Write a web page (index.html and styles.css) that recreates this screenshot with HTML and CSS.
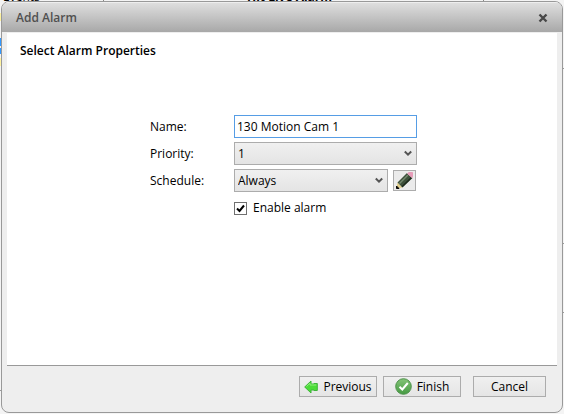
FILE: index.html
```
<!DOCTYPE html>
<html lang="en">
    <head>
        <meta charset="UTF-8">
        <meta name="viewport" content="width=device-width, initial-scale=1">
        <title>Add Alarm</title>
        <link rel="stylesheet" href="styles.css">
    </head>
    <body>
        <!-- Window behind the dialog -->
        <div class="backdrop" aria-hidden="true">
            <div class="caption left">Events</div>
            <div class="caption middle">Hit Live Alarm</div>
            <div class="divider"></div>
            <div class="divider second"></div>
            <div class="mark yellow"></div>
            <div class="mark blue"></div>
            <div class="mark blue second"></div>
            <div class="mark yellow second"></div>
            <div class="rule low"></div>
            <div class="rule right"></div>
            <div class="rule right second"></div>
            <div class="rule right third"></div>
        </div>

        <form class="dialog">
            <div class="titlebar">
                <h1>Add Alarm</h1>
                <button type="button" class="close" aria-label="Close">
                    <svg width="10" height="10" viewBox="0 0 10 10">
                        <path d="M1.500 1.500L8.500 8.500M8.500 1.500L1.500 8.500" stroke="#484848" stroke-width="2.400" fill="none"/>
                    </svg>
                </button>
            </div>

            <div class="page">
                <h2>Select Alarm Properties</h2>
                <div class="fields">
                    <label for="name">Name:</label>
                    <input type="text" id="name" class="box wide" value="130 Motion Cam 1">

                    <label for="priority">Priority:</label>
                    <select id="priority" class="box wide">
                        <option>1</option>
                    </select>

                    <label for="schedule">Schedule:</label>
                    <select id="schedule" class="box">
                        <option>Always</option>
                    </select>
                    <button type="button" class="edit" aria-label="Edit schedule">
                        <svg width="19" height="19" viewBox="0 0 19 19">
                            <path d="M1.500 17.500L2.500 11.500L7.500 16.500Z" fill="#e2cf8c"/>
                            <path d="M1.500 17.500V15L4 17.500Z" fill="#080808" stroke="#080808"/>
                            <path d="M2.500 11.500L12 2L17.500 7L7.500 16.500Z" fill="#3d503b"/>
                            <path d="M4.500 12.500L13 4" stroke="#75896f" stroke-width="1.400"/>
                            <path d="M7 15.800L16.500 6.500" stroke="#1c2a1c" stroke-width="1.400"/>
                            <path d="M12.500 2.500L14 1.500H17.500V5L17 6.500Z" fill="#e79cb9" stroke="#e79cb9"/>
                        </svg>
                    </button>

                    <div class="check">
                        <input type="checkbox" id="enable" checked>
                        <label for="enable">Enable alarm</label>
                    </div>
                </div>
            </div>

            <div class="buttons">
                <button type="button">
                    <svg width="14" height="14" viewBox="0 0 14 14">
                        <path d="M.7 7L7 1V4H10V3.500H13.300V10.500H10V10H7V13Z" fill="#4bdc38" stroke="#3fb43a" stroke-linejoin="round"/>
                        <path d="M2.500 6.500L6 3.200V5H12.300" stroke="#8df07a" fill="none"/>
                    </svg>
                    Previous
                </button>
                <button type="submit">
                    <svg width="17" height="17" viewBox="0 0 17 17">
                        <defs>
                            <linearGradient id="green" x1="0" y1="0" x2="0" y2="1">
                                <stop offset="0" stop-color="#84c478"/>
                                <stop offset="1" stop-color="#459a42"/>
                            </linearGradient>
                        </defs>
                        <circle cx="8.500" cy="8.500" r="7.800" fill="url(#green)" stroke="#4f924c"/>
                        <path d="M4.500 8.700L7.300 11.500L12.800 5" stroke="#fff" stroke-width="2" fill="none"/>
                    </svg>
                    Finish
                </button>
                <button type="button" class="cancel">Cancel</button>
            </div>
        </form>
    </body>
</html>
```
FILE: styles.css
```
* {
    box-sizing: border-box;
}

body {
    margin: 0;
    min-height: 100vh;
    padding: 1px;
    display: flex;
    background: #f4f4f4;
    color: #000;
    font: 12px/16px "Open Sans", "Noto Sans", sans-serif;
}

/* What shows round the edges of the dialog */
.backdrop {
    position: absolute;
    inset: 0;
    overflow: hidden;
    z-index: -1;
}

.caption {
    position: absolute;
    top: -11px;
}

.caption.left {
    left: 3px;
}

.caption.middle {
    left: 247px;
    font-weight: bold;
}

.divider {
    position: absolute;
    left: 103px;
    top: 0;
    width: 1px;
    height: 2px;
    background: #888;
}

.divider.second {
    left: 483px;
}

.mark {
    position: absolute;
    left: 0;
    width: 2px;
    height: 8px;
}

.mark.yellow {
    top: 13px;
    background: #fff3a0;
}

.mark.blue {
    top: 38px;
    background: #3399ff;
}

.mark.blue.second {
    top: 48px;
    height: 6px;
}

.mark.yellow.second {
    top: 58px;
}

.rule {
    position: absolute;
    height: 1px;
    width: 2px;
    background: #999;
}

.rule.low {
    left: 0;
    top: 390px;
}

.rule.right {
    right: 0;
    top: 68px;
}

.rule.right.second {
    top: 243px;
}

.rule.right.third {
    top: 312px;
}

/* The dialog frame */
.dialog {
    flex: 1;
    display: flex;
    flex-direction: column;
    border: 1px solid #999;
    border-radius: 8px;
    overflow: hidden;
    background: #eee;
}

.titlebar {
    display: flex;
    align-items: center;
    justify-content: space-between;
    height: 30px;
    padding: 0 14px;
    border-top: 1px solid #eee;
    background: linear-gradient(#dedede, #a8a8a8);
}

h1 {
    margin: 0;
    color: #505050;
    font-size: 12px;
    font-weight: 600;
}

h2 {
    margin: 0;
    font-size: 12px;
    font-weight: 600;
}

.close {
    display: flex;
    padding: 0;
    border: 0;
    background: none;
}

/* White page with the form */
.page {
    flex: 1;
    margin: 1px 5px 0;
    padding: 10px 13px;
    border-bottom: 1px solid #999;
    background: #fff;
}

.fields {
    display: grid;
    grid-template-columns: 79px 154px 24px;
    column-gap: 5px;
    row-gap: 4px;
    align-items: center;
    justify-content: center;
    padding: 56px 0 0 3px;
}

.box {
    width: 100%;
    height: 23px;
    padding: 0 3px;
    border: 1px solid #acacac;
    border-radius: 0;
    color: #000;
    font: inherit;
}

.wide {
    grid-column: span 2;
}

input.box {
    padding: 0 2px;
    border-color: #569de5;
    background: #fff;
    outline: none;
}

select.box {
    appearance: none;
    background: url("data:image/svg+xml,%3Csvg xmlns='http://www.w3.org/2000/svg' width='8' height='7'%3E%3Cpath d='M.8 1.500L4 4.700L7.200 1.500' fill='none' stroke='%23555' stroke-width='2'/%3E%3C/svg%3E") no-repeat right 4px center, linear-gradient(#f0f0f0, #e4e4e4);
}

.edit {
    display: flex;
    align-items: center;
    justify-content: center;
    width: 23px;
    height: 21px;
    padding: 0;
    border: 1px solid #acacac;
    background: #ebebeb;
}

.check {
    grid-column: 2 / span 2;
    display: flex;
    align-items: center;
    gap: 6px;
    height: 24px;
}

.check input {
    appearance: none;
    width: 13px;
    height: 13px;
    margin: 0;
    border: 1px solid #707070;
    background: #fff;
}

.check input:checked {
    background: #fff url("data:image/svg+xml,%3Csvg xmlns='http://www.w3.org/2000/svg' width='11' height='11'%3E%3Cpath d='M2 5.500L4.500 8L9 2.500' fill='none' stroke='%23000' stroke-width='2'/%3E%3C/svg%3E") no-repeat center;
}

/* Wizard buttons */
.buttons {
    display: flex;
    justify-content: flex-end;
    gap: 6px;
    padding: 10px 16px 15px;
}

.buttons button {
    display: flex;
    align-items: center;
    justify-content: center;
    gap: 5px;
    width: 78px;
    height: 21px;
    padding: 0;
    border: 1px solid #acacac;
    background: linear-gradient(#f0f0f0, #e5e5e5);
    color: #000;
    font: inherit;
}

.buttons .cancel {
    width: 73px;
    margin-left: 6px;
}
```
